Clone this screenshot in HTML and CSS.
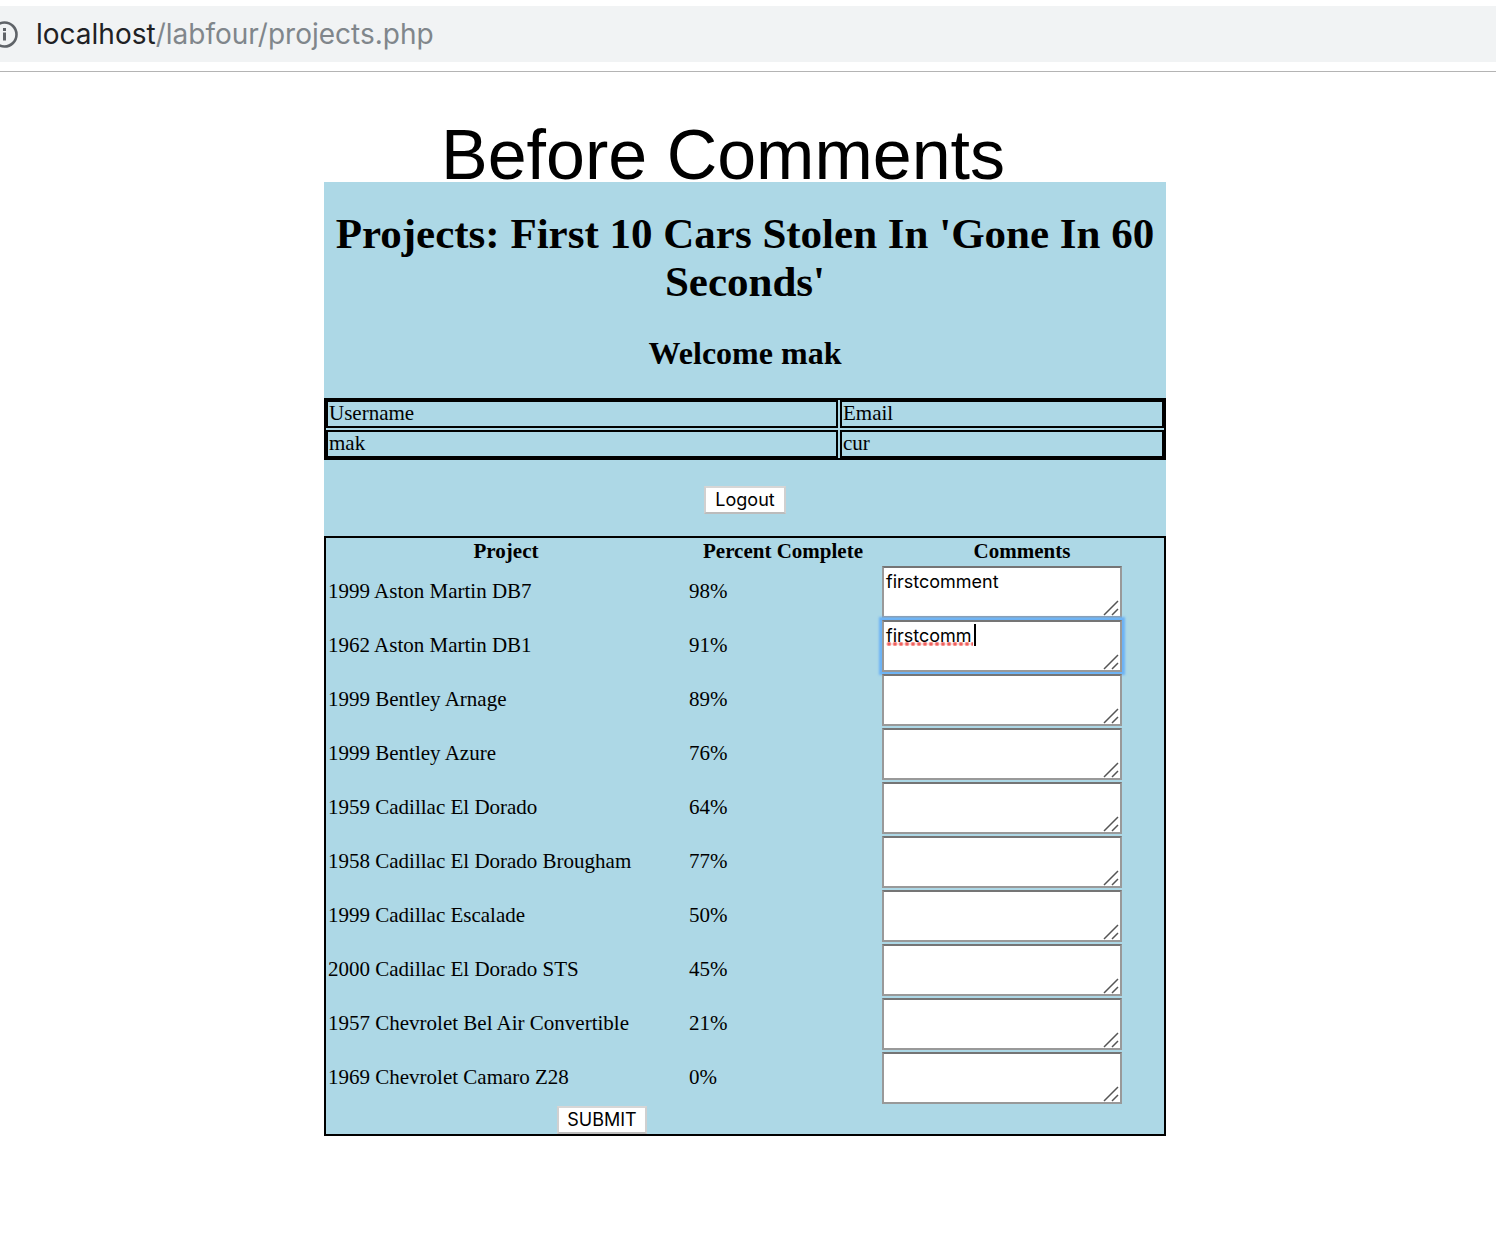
FILE: index.html
```html
<!DOCTYPE html>
<html lang="en">
<head>
<meta charset="utf-8">
<title>Projects</title>
<link rel="stylesheet" href="styles.css">
</head>
<body>
<header class="toolbar">
  <div class="address">
    <svg class="info" viewBox="0 0 19 28" width="19" height="28" aria-hidden="true">
      <circle cx="4.5" cy="14.5" r="12" fill="none" stroke="#5f6368" stroke-width="2.6"/>
      <path d="M3 8h3v3H3zM3 12.500h3v8H3z" fill="#5f6368"/>
    </svg>
    <div class="url"><span class="host">localhost</span>/labfour/projects.php</div>
  </div>
</header>
<main class="page">
  <p class="caption">Before Comments</p>
  <section class="panel">
    <h1>Projects: First 10 Cars Stolen In 'Gone In 60 Seconds'</h1>
    <h2>Welcome mak</h2>
    <table class="user">
      <colgroup><col class="user-name"><col></colgroup>
      <tr><td>Username</td><td>Email</td></tr>
      <tr><td>mak</td><td>cur</td></tr>
    </table>
    <button class="btn logout" type="button">Logout</button>
    <form>
      <table class="projects">
        <colgroup><col class="c-project"><col class="c-percent"><col class="c-comments"></colgroup>
        <thead><tr><th>Project</th><th>Percent Complete</th><th>Comments</th></tr></thead>
        <tbody>
          <tr><td>1999 Aston Martin DB7</td><td class="percent">98%</td><td class="comment"><div class="field"><textarea aria-label="Comment on 1999 Aston Martin DB7">firstcomment</textarea></div></td></tr>
          <tr><td>1962 Aston Martin DB1</td><td class="percent">91%</td><td class="comment"><div class="field"><textarea class="active" spellcheck="false" aria-label="Comment on 1962 Aston Martin DB1">firstcomm</textarea><span class="misspelt"></span><span class="caret"></span></div></td></tr>
          <tr><td>1999 Bentley Arnage</td><td class="percent">89%</td><td class="comment"><div class="field"><textarea aria-label="Comment on 1999 Bentley Arnage"></textarea></div></td></tr>
          <tr><td>1999 Bentley Azure</td><td class="percent">76%</td><td class="comment"><div class="field"><textarea aria-label="Comment on 1999 Bentley Azure"></textarea></div></td></tr>
          <tr><td>1959 Cadillac El Dorado</td><td class="percent">64%</td><td class="comment"><div class="field"><textarea aria-label="Comment on 1959 Cadillac El Dorado"></textarea></div></td></tr>
          <tr><td>1958 Cadillac El Dorado Brougham</td><td class="percent">77%</td><td class="comment"><div class="field"><textarea aria-label="Comment on 1958 Cadillac El Dorado Brougham"></textarea></div></td></tr>
          <tr><td>1999 Cadillac Escalade</td><td class="percent">50%</td><td class="comment"><div class="field"><textarea aria-label="Comment on 1999 Cadillac Escalade"></textarea></div></td></tr>
          <tr><td>2000 Cadillac El Dorado STS</td><td class="percent">45%</td><td class="comment"><div class="field"><textarea aria-label="Comment on 2000 Cadillac El Dorado STS"></textarea></div></td></tr>
          <tr><td>1957 Chevrolet Bel Air Convertible</td><td class="percent">21%</td><td class="comment"><div class="field"><textarea aria-label="Comment on 1957 Chevrolet Bel Air Convertible"></textarea></div></td></tr>
          <tr><td>1969 Chevrolet Camaro Z28</td><td class="percent">0%</td><td class="comment"><div class="field"><textarea aria-label="Comment on 1969 Chevrolet Camaro Z28"></textarea></div></td></tr>
        </tbody>
        <tfoot><tr><td colspan="2"><button class="btn submit" type="submit">SUBMIT</button></td><td></td></tr></tfoot>
      </table>
    </form>
  </section>
</main>
</body>
</html>
```

FILE: styles.css
```css
* { box-sizing: border-box; }

body {
  margin: 0;
  background: #fff;
  color: #000;
  font: 21px/24px "Liberation Serif", "Times New Roman", serif;
}

.toolbar {
  padding: 6px 0 9px;
  border-bottom: 1px solid #b4b4b4;
}

.address {
  display: flex;
  align-items: center;
  gap: 17px;
  height: 56px;
  background: #f1f3f4;
}

.info { display: block; flex: none; }

.url {
  font: 28px/32px Inter, sans-serif;
  color: #80868b;
}

.host { color: #202124; }

.page {
  padding: 58px 6px 102px 0;
}

.caption {
  margin: 0;
  padding: 0 44px 2px 0;
  font: 70px/50px "Liberation Sans", Arial, sans-serif;
  text-align: center;
}

.panel {
  max-width: 842px;
  margin: 0 auto;
  padding-top: 28px;
  background: #add8e6;
  text-align: center;
}

h1 {
  margin: 0 0 29px;
  font-size: 43px;
  line-height: 48px;
}

h2 {
  margin: 0 0 27px;
  font-size: 32px;
  line-height: 36px;
}

table {
  width: 100%;
  table-layout: fixed;
  text-align: left;
}

.user {
  border-spacing: 2px;
  box-shadow: inset 0 0 0 2px #000;
}

.user td {
  padding: 0 0 2px 1px;
  border: 2px solid #000;
  line-height: 22px;
}

.user-name { width: 512px; }

.btn {
  display: block;
  height: 28px;
  margin: 0 auto;
  padding: 0;
  border: 2px solid;
  border-color: #d6d6d6 #d0d0d0 #bcbcbc;
  background: #fff;
  color: #000;
  font: 18px/24px Inter, sans-serif;
}

.logout {
  width: 82px;
  margin: 26px auto 22px;
}

.submit { width: 90px; }

.projects {
  border: 2px solid #000;
  border-spacing: 0;
}

.projects th {
  height: 27px;
  padding: 0 2px 1px;
  text-align: center;
}

.projects td { padding: 0 2px 2px; }
.projects .percent { padding-left: 3px; }
.projects .comment { padding: 1px 2px; }
.projects tfoot td { padding: 1px 4px 0 2px; }

.c-project { width: 360px; }
.c-percent { width: 194px; }

.field {
  position: relative;
  width: 240px;
}

textarea {
  display: block;
  width: 100%;
  height: 52px;
  padding: 3px 2px 1px;
  border: 2px solid #999;
  border-top-color: #757575;
  outline: none;
  overflow: hidden;
  resize: none;
  background: #fff url("data:image/svg+xml,%3Csvg xmlns='http://www.w3.org/2000/svg' width='16' height='16'%3E%3Cpath d='M1 15L15 1M9 15l6-6' stroke='%23555' stroke-width='1.500' fill='none'/%3E%3C/svg%3E") no-repeat right 1px bottom 0;
  color: #000;
  font: 18px/22px Inter, sans-serif;
}

.active { box-shadow: 0 0 2px 3px #6cb2f5; }

.misspelt {
  position: absolute;
  left: 4px;
  top: 22px;
  width: 87px;
  height: 4px;
  background: radial-gradient(circle, #f0605c 1px, #f0605c80 2px, transparent 3px) 0 0 / 6px 4px;
}

.caret {
  position: absolute;
  left: 92px;
  top: 4px;
  width: 2px;
  height: 22px;
  background: #000;
}
```
